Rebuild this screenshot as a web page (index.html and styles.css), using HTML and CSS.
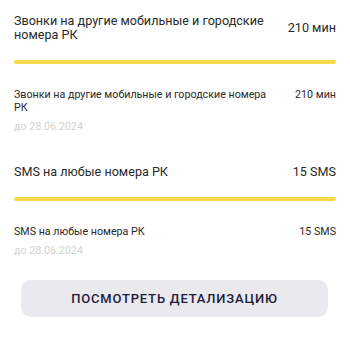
FILE: index.html
```html
<!DOCTYPE html>
<html lang="ru">
<head>
<meta charset="utf-8">
<link rel="stylesheet" href="styles.css">
</head>
<body>
<div class="page">
  <div class="group">
    <div class="head">
      <div class="head-title">Звонки на другие мобильные и городские номера РК</div>
      <div class="head-value">210 мин</div>
    </div>
    <div class="bar"></div>
    <div class="item">
      <div class="item-row">
        <div class="item-title">Звонки на другие мобильные и городские номера РК</div>
        <div class="item-value">210 мин</div>
      </div>
      <div class="item-date">до 28.06.2024</div>
    </div>
  </div>
  <div class="group group-sms">
    <div class="head">
      <div class="head-title">SMS на любые номера РК</div>
      <div class="head-value">15 SMS</div>
    </div>
    <div class="bar"></div>
    <div class="item">
      <div class="item-row">
        <div class="item-title">SMS на любые номера РК</div>
        <div class="item-value">15 SMS</div>
      </div>
      <div class="item-date">до 28.06.2024</div>
    </div>
  </div>
  <div class="actions">
    <button class="btn">ПОСМОТРЕТЬ ДЕТАЛИЗАЦИЮ</button>
  </div>
</div>
</body>
</html>
```

FILE: styles.css
```css
html, body {
  margin: 0;
  padding: 0;
  background: #ffffff;
}
body {
  font-family: Roboto, "Noto Sans", sans-serif;
  color: #2a2a2a;
  width: 350px;
  height: 350px;
  overflow: hidden;
}
.page {
  padding: 14px 14px 0 14px;
}
.head {
  display: flex;
  justify-content: space-between;
  align-items: center;
  gap: 16px;
  font-size: 12.6px;
  line-height: 14px;
}
.head-value {
  white-space: nowrap;
}
.bar {
  height: 4px;
  border-radius: 2px;
  background: #f7d94c;
  margin-top: 18px;
}
.item {
  padding-top: 24px;
}
.item-row {
  display: flex;
  justify-content: space-between;
  align-items: flex-start;
  gap: 16px;
  font-size: 10.7px;
  line-height: 13px;
}
.item-value {
  white-space: nowrap;
}
.item-date {
  font-size: 10.7px;
  line-height: 13px;
  color: #d3d3d3;
  margin-top: 6px;
}
.group-sms {
  margin-top: 32px;
}
.actions {
  padding: 23px 8px 0 7px;
}
.btn {
  display: block;
  width: 100%;
  height: 37px;
  border: none;
  border-radius: 10px;
  background: #e9e9ee;
  color: #1e1d3a;
  font-family: Roboto, "Noto Sans", sans-serif;
  font-size: 13px;
  font-weight: 500;
  letter-spacing: 0.8px;
}
```
